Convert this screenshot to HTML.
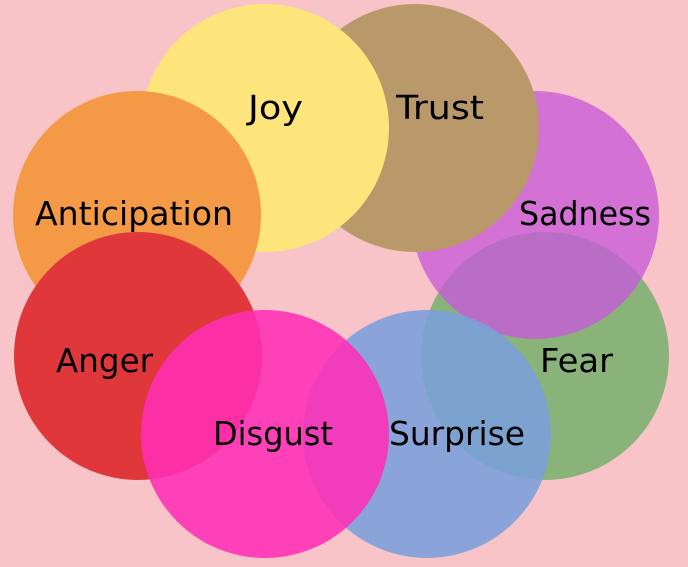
<!DOCTYPE html>
<html><head><meta charset="utf-8"><style>
html,body{margin:0;padding:0;background:#f8c4c8;}
svg{display:block}
text{font-family:"DejaVu Sans","Liberation Sans",sans-serif;font-size:33px;fill:#000;}
</style></head><body>
<svg width="688" height="567" viewBox="0 0 688 567">
<rect width="688" height="567" fill="#f8c4c8"/>
<circle cx="545" cy="356" r="124" fill="#8ab37a"/>
<circle cx="535" cy="215" r="124" fill="#c85ad8" opacity="0.78"/>
<circle cx="415" cy="128" r="124" fill="#b9996a"/>
<circle cx="265" cy="128" r="124" fill="#fde47b"/>
<circle cx="137" cy="215" r="124" fill="#f49a47"/>
<circle cx="138" cy="356" r="124" fill="#e0373a"/>
<circle cx="427" cy="434" r="124" fill="#7a9fdc" opacity="0.88"/>
<circle cx="265" cy="434" r="124" fill="#ff2fb6" opacity="0.88"/>
<text x="248" y="119" textLength="55" lengthAdjust="spacingAndGlyphs">Joy</text>
<text x="396" y="119" textLength="88" lengthAdjust="spacingAndGlyphs">Trust</text>
<text x="519" y="225" textLength="132" lengthAdjust="spacingAndGlyphs">Sadness</text>
<text x="35" y="225" textLength="198" lengthAdjust="spacingAndGlyphs">Anticipation</text>
<text x="56" y="372" textLength="97" lengthAdjust="spacingAndGlyphs">Anger</text>
<text x="540" y="372" textLength="73" lengthAdjust="spacingAndGlyphs">Fear</text>
<text x="213" y="445" textLength="120" lengthAdjust="spacingAndGlyphs">Disgust</text>
<text x="389" y="445" textLength="136" lengthAdjust="spacingAndGlyphs">Surprise</text>
</svg>
</body></html>
